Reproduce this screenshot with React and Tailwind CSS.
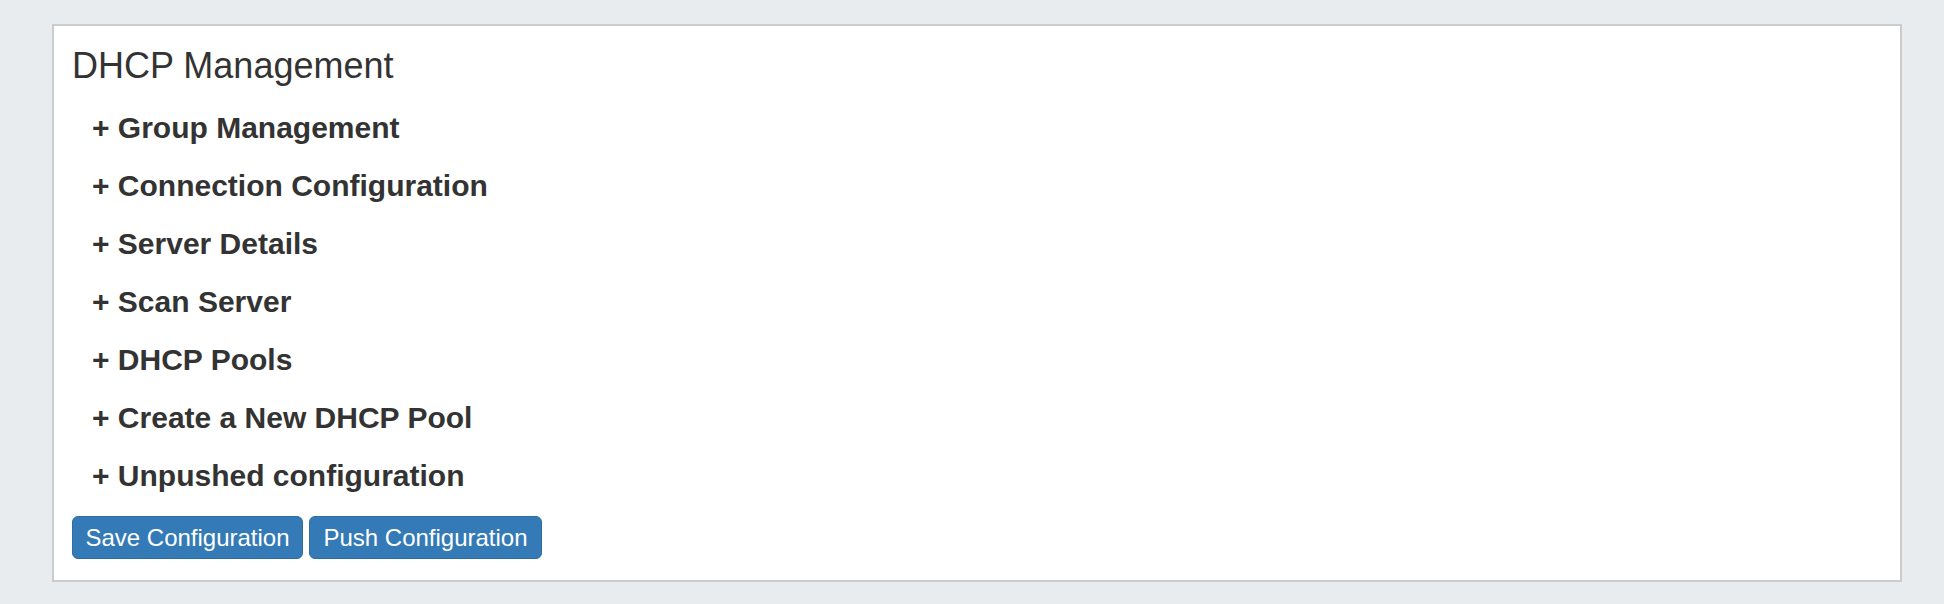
import React from "react";

const sections = [
  "Group Management",
  "Connection Configuration",
  "Server Details",
  "Scan Server",
  "DHCP Pools",
  "Create a New DHCP Pool",
  "Unpushed configuration",
];

export default function App() {
  return (
    <div className="min-h-[604px] w-full bg-[#e9ecef] pt-[24px] pl-[52px] font-['Liberation_Sans',Arial,sans-serif] text-[#333333]">
      <div className="w-[1850px] h-[558px] border-2 border-[#cccccc] bg-white pt-5 pb-[21px] pl-[16px]">
        <h3 className="pl-[2px] text-[36px] leading-[40px] font-normal mb-[25px]">DHCP Management</h3>

        {sections.map((title, i) => (
          <div
            key={title}
            className={`pl-[22px] text-[30px] leading-[33px] font-bold cursor-pointer ${
              i === sections.length - 1 ? "mb-[24px]" : "mb-[25px]"
            }`}
          >
            + {title}
          </div>
        ))}

        {/* action buttons */}
        <div className="flex gap-[6px] ml-[2px]">
          <button className="h-[43px] w-[231px] rounded-[6px] border border-[#2e6da4] bg-[#337ab7] text-white text-[24px] leading-none">
            Save Configuration
          </button>
          <button className="h-[43px] w-[233px] rounded-[6px] border border-[#2e6da4] bg-[#337ab7] text-white text-[24px] leading-none">
            Push Configuration
          </button>
        </div>
      </div>
    </div>
  );
}
